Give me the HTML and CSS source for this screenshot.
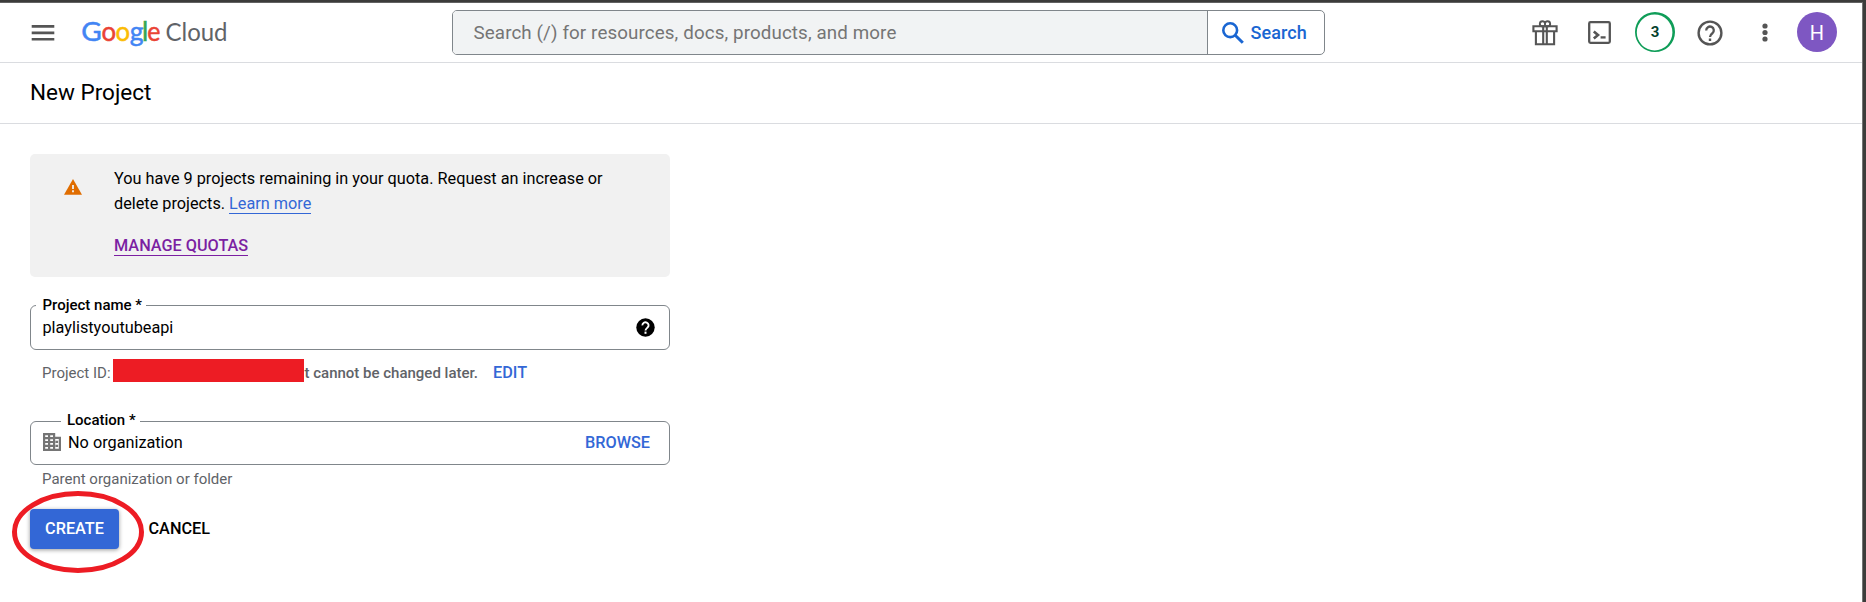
FILE: index.html
```html
<!DOCTYPE html>
<html lang="en">
<head>
<meta charset="utf-8">
<title>New Project – Google Cloud</title>
<link rel="stylesheet" href="styles.css">
</head>
<body>
<div class="window">
  <header class="topbar">
    <div class="brand">
      <svg class="menu-icon" width="24" height="16" viewBox="0 0 24 16" fill="#555"><path d="M.7 0h22.6v2.7H.7zM.7 6.6h22.6v2.7H.7zM.7 13h22.6v2.6H.7z"/></svg>
      <svg class="logo" width="150" height="32" viewBox="0 0 150 32">
        <g font-size="26.5" stroke-width=".5">
          <text y="24.5" x="0.2" fill="#4285f4" stroke="#4285f4" textLength="20.5" lengthAdjust="spacingAndGlyphs">G</text>
          <text y="24.5" x="20.5" fill="#ea4335" stroke="#ea4335" textLength="14.6" lengthAdjust="spacingAndGlyphs">o</text>
          <text y="24.5" x="34.5" fill="#fbbc04" stroke="#fbbc04" textLength="14.6" lengthAdjust="spacingAndGlyphs">o</text>
          <text y="24.5" x="48.7" fill="#4285f4" stroke="#4285f4" textLength="13.8" lengthAdjust="spacingAndGlyphs">g</text>
          <text y="24.5" x="61" fill="#34a853" stroke="#34a853">l</text>
          <text y="24.5" x="66.2" fill="#ea4335" stroke="#ea4335" textLength="13.2" lengthAdjust="spacingAndGlyphs">e</text>
        </g>
        <text class="logo-cloud" y="24.5" x="84.5" font-size="25.5" textLength="62" lengthAdjust="spacingAndGlyphs" fill="#5f6368">Cloud</text>
      </svg>
    </div>
    <div class="search">
      <div class="search-input">Search (/) for resources, docs, products, and more</div>
      <div class="search-button">
        <svg width="22" height="22" viewBox="0 0 22 22" fill="none" stroke="#1a66d2"><circle cx="8.2" cy="8.2" r="6.9" stroke-width="2.6"/><path d="M13.2 13.2l7.6 7.6" stroke-width="3"/></svg>
        <span class="search-label">Search</span>
      </div>
    </div>
    <div class="tools">
      <svg class="gift" width="26" height="27" viewBox="0 0 26 27" fill="none" stroke="#555" stroke-width="2.1"><path d="M1.4 7.3h23.2v4.9H1.4zM3.9 12.2h18.2v13H3.9zM11.2 7.3v17.9M14.8 7.3v17.9"/><path d="M13 7.3H9.8a2.6 2.6 0 1 1 3.2-3zM13 7.3h3.2a2.6 2.6 0 1 0-3.2-3z" stroke-width="1.9"/></svg>
      <svg class="shell" width="23" height="23" viewBox="0 0 23 23" fill="none" stroke="#555"><rect x="1.2" y="1.2" width="20.6" height="20.6" rx="1.3" stroke-width="2.3"/><path d="M5.8 10.4l4.2 3.5-4.2 3.5" stroke-width="2.6"/><path d="M12.6 16.4h5" stroke-width="2.3"/></svg>
      <div class="count"><svg class="ring" width="40" height="40" viewBox="0 0 40 40"><path fill="#0f9d58" fill-rule="evenodd" d="M20 0a20 20 0 1 1 0 40a20 20 0 1 1 0-40zM19.6 2.4a17.8 18 0 1 0 0 36a17.8 18 0 1 0 0-36z"/></svg><span>3</span></div>
      <svg class="help" width="26" height="26" viewBox="0 0 26 26" fill="none" stroke="#555"><circle cx="13" cy="13" r="11.4" stroke-width="2.4"/><path d="M9.2 10.4a3.8 3.8 0 1 1 6.2 2.9c-1.5 1.1-2.4 1.8-2.4 3.7" stroke-width="2.3"/><path d="M13 18.5v2.5" stroke-width="2.4"/></svg>
      <svg class="dots" width="6" height="19" viewBox="0 0 6 19" fill="#555"><circle cx="3" cy="3" r="2.6"/><circle cx="3" cy="9.5" r="2.6"/><circle cx="3" cy="16" r="2.6"/></svg>
      <div class="avatar">H</div>
    </div>
  </header>
  <div class="titlebar"><h1>New Project</h1></div>
  <main class="content">
    <section class="notice">
      <svg class="warn" width="18" height="16" viewBox="0 0 18 16"><path fill="#e06d00" d="M9 0l9 15.7H0z"/><path fill="#f1f1f1" d="M8.1 6h1.8v4H8.1zM8.1 11.3h1.8v2H8.1z"/></svg>
      <div>
        <p class="notice-text">You have 9 projects remaining in your quota. Request an increase or<br>delete projects. <a class="learn">Learn more</a></p>
        <p class="notice-action"><a class="manage">MANAGE QUOTAS</a></p>
      </div>
    </section>
    <fieldset class="field name-field">
      <legend>Project name *</legend>
      <div class="row"><span class="value name-value">playlistyoutubeapi</span>
      <svg width="19" height="19" viewBox="0 0 19 19"><circle cx="9.5" cy="9.5" r="9.2"/><path d="M6.4 7.4a3.1 3 0 1 1 5.1 2.2c-1.2 1-2 1.5-2 3" fill="none" stroke="#fff" stroke-width="1.9"/><path d="M9.5 13.6v2.2" stroke="#fff" stroke-width="2"/></svg></div>
    </fieldset>
    <div class="project-id"><span class="pid">Project ID:</span><span class="redacted"></span><span class="fixed">t cannot be changed later.</span><a class="action edit">EDIT</a></div>
    <fieldset class="field location-field">
      <legend>Location *</legend>
      <div class="row">
        <svg class="org" width="18" height="18" viewBox="0 0 18 18" fill="none" stroke="#757575" stroke-width="2.2"><path d="M1.1 1.1h10v15.8h-10zM1 5.1h10.2M1 9h10.2M1 12.9h10.2M6.1 1v16M11.2 4.9h5.7v12h-5.7M12.5 8.9h2.6M12.5 12.9h2.6"/></svg>
        <span class="value org-value">No organization</span><a class="action browse">BROWSE</a>
      </div>
    </fieldset>
    <div class="hint">Parent organization or folder</div>
    <div class="buttons">
      <span class="create">CREATE</span><span class="cancel">CANCEL</span>
      <svg class="marker" width="134" height="84" viewBox="0 0 134 84"><ellipse cx="67" cy="42" rx="63.5" ry="38.5" fill="none" stroke="#ed1c24" stroke-width="5"/></svg>
    </div>
  </main>
</div>
</body>
</html>
```
FILE: styles.css
```css
* { box-sizing: border-box; }
body { margin: 0; height: 602px; overflow: hidden; background: #3c3c3a; font: 16.25px/25px Roboto, "Liberation Sans", sans-serif; color: #000; }
.window { width: 1863px; height: 600px; margin-top: 2px; background: #fff; border-top: 1px solid #626262; border-right: 1px solid #747474; }
p, h1 { margin: 0; }
.topbar { height: 60px; border-bottom: 1px solid #dadce0; display: flex; padding: 0 24px 0 31px; }
.brand { display: flex; width: 421px; }
.menu-icon { margin-top: 22px; }
.logo { margin: 13px 0 0 26px; overflow: visible; font-family: Lato, sans-serif; }
.search { width: 873px; height: 45px; margin-top: 7px; border: 1px solid #80868b; border-radius: 5px; display: flex; overflow: hidden; }
.search-input { width: 755px; background: #f1f3f4; border-right: 1px solid #80868b; padding: 9px 0 0 20.5px; font-size: 18.75px; line-height: 26px; color: #757575; letter-spacing: .12px; white-space: nowrap; }
.search-button { flex: 1; display: flex; padding-left: 14px; }
.search-button svg { margin-top: 11px; }
.search-label { margin: 9px 0 0 6.5px; font-size: 18px; font-weight: 500; color: #1a66d2; letter-spacing: .1px; }
.tools { flex: 1; display: flex; padding-left: 207px; }
.gift { margin-top: 16px; }
.shell { margin: 18px 0 0 30px; }
.count { position: relative; width: 40px; height: 40px; margin: 9px 0 0 24px; text-align: center; font-size: 15px; font-weight: 700; line-height: 40px; color: #04422f; }
.ring { position: absolute; left: 0; top: 0; }
.help { margin: 17px 0 0 22px; }
.dots { margin: 20px 0 0 38.5px; }
.avatar { width: 40px; height: 40px; margin: 9px 0 0 29.5px; border-radius: 50%; background: #7e57c2; color: #fff; text-align: center; font-size: 20px; line-height: 42px; }
.titlebar { height: 61px; border-bottom: 1px solid #dadce0; padding: 16px 30px 0; }
h1 { font-size: 22.5px; line-height: 27px; font-weight: 400; }
.content { width: 670px; padding: 30px 0 0 30px; }
.notice { height: 123px; background: #f1f1f1; border-radius: 5px; display: flex; padding: 12px 34px 0; }
.warn { margin: 13px 32px 0 0; }
.notice-text { white-space: nowrap; }
.learn { color: #3367d6; border-bottom: 1px solid #3367d6; }
.notice-action { margin-top: 17px; }
.manage { color: #7b1fa2; font-weight: 500; border-bottom: 1px solid #7b1fa2; }
.field { margin: 0; min-width: 0; border: 1px solid #80868b; border-radius: 6px; padding: 0; }
.field legend { font-size: 15px; line-height: 20px; font-weight: 500; padding: 0 4.5px 0 6.5px; margin-left: 5px; white-space: nowrap; }
.name-field { margin-top: 18px; height: 55px; }
.row { display: flex; }
.name-value { margin: 0 0 0 11.5px; flex: 1; }
.name-field svg { margin: 3px 14.5px 0 0; }
.project-id { display: flex; height: 23px; margin-top: 9px; color: #5f6368; font-size: 15px; line-height: 28px; white-space: nowrap; }
.pid { width: 83px; padding-left: 12px; }
.redacted { width: 191px; height: 23px; background: #ed1c24; }
.fixed { width: 189px; padding-left: .5px; font-weight: 500; }
.action { color: #3367d6; font-weight: 500; font-size: 16.25px; }
.location-field { margin-top: 28px; height: 55px; }
.field.location-field legend { margin-left: 29.5px; padding-bottom: 2px; }
.location-field .row { margin-top: -2px; }
.org { margin: 3px 7.5px 0 11.5px; }
.org-value { flex: 1; }
.browse { margin-right: 19px; }
.hint { padding-left: 12px; margin-top: 2px; font-size: 15px; color: #5f6368; }
.buttons { position: relative; display: flex; margin-top: 17px; font-weight: 500; line-height: 39px; }
.create { width: 89px; height: 40px; text-align: center; color: #fff; background: #3367d6; border-radius: 4px; box-shadow: 0 1px 4px rgba(0,0,0,.4); }
.cancel { margin-left: 29.5px; }
.marker { position: absolute; left: -19px; top: -19px; }
```
